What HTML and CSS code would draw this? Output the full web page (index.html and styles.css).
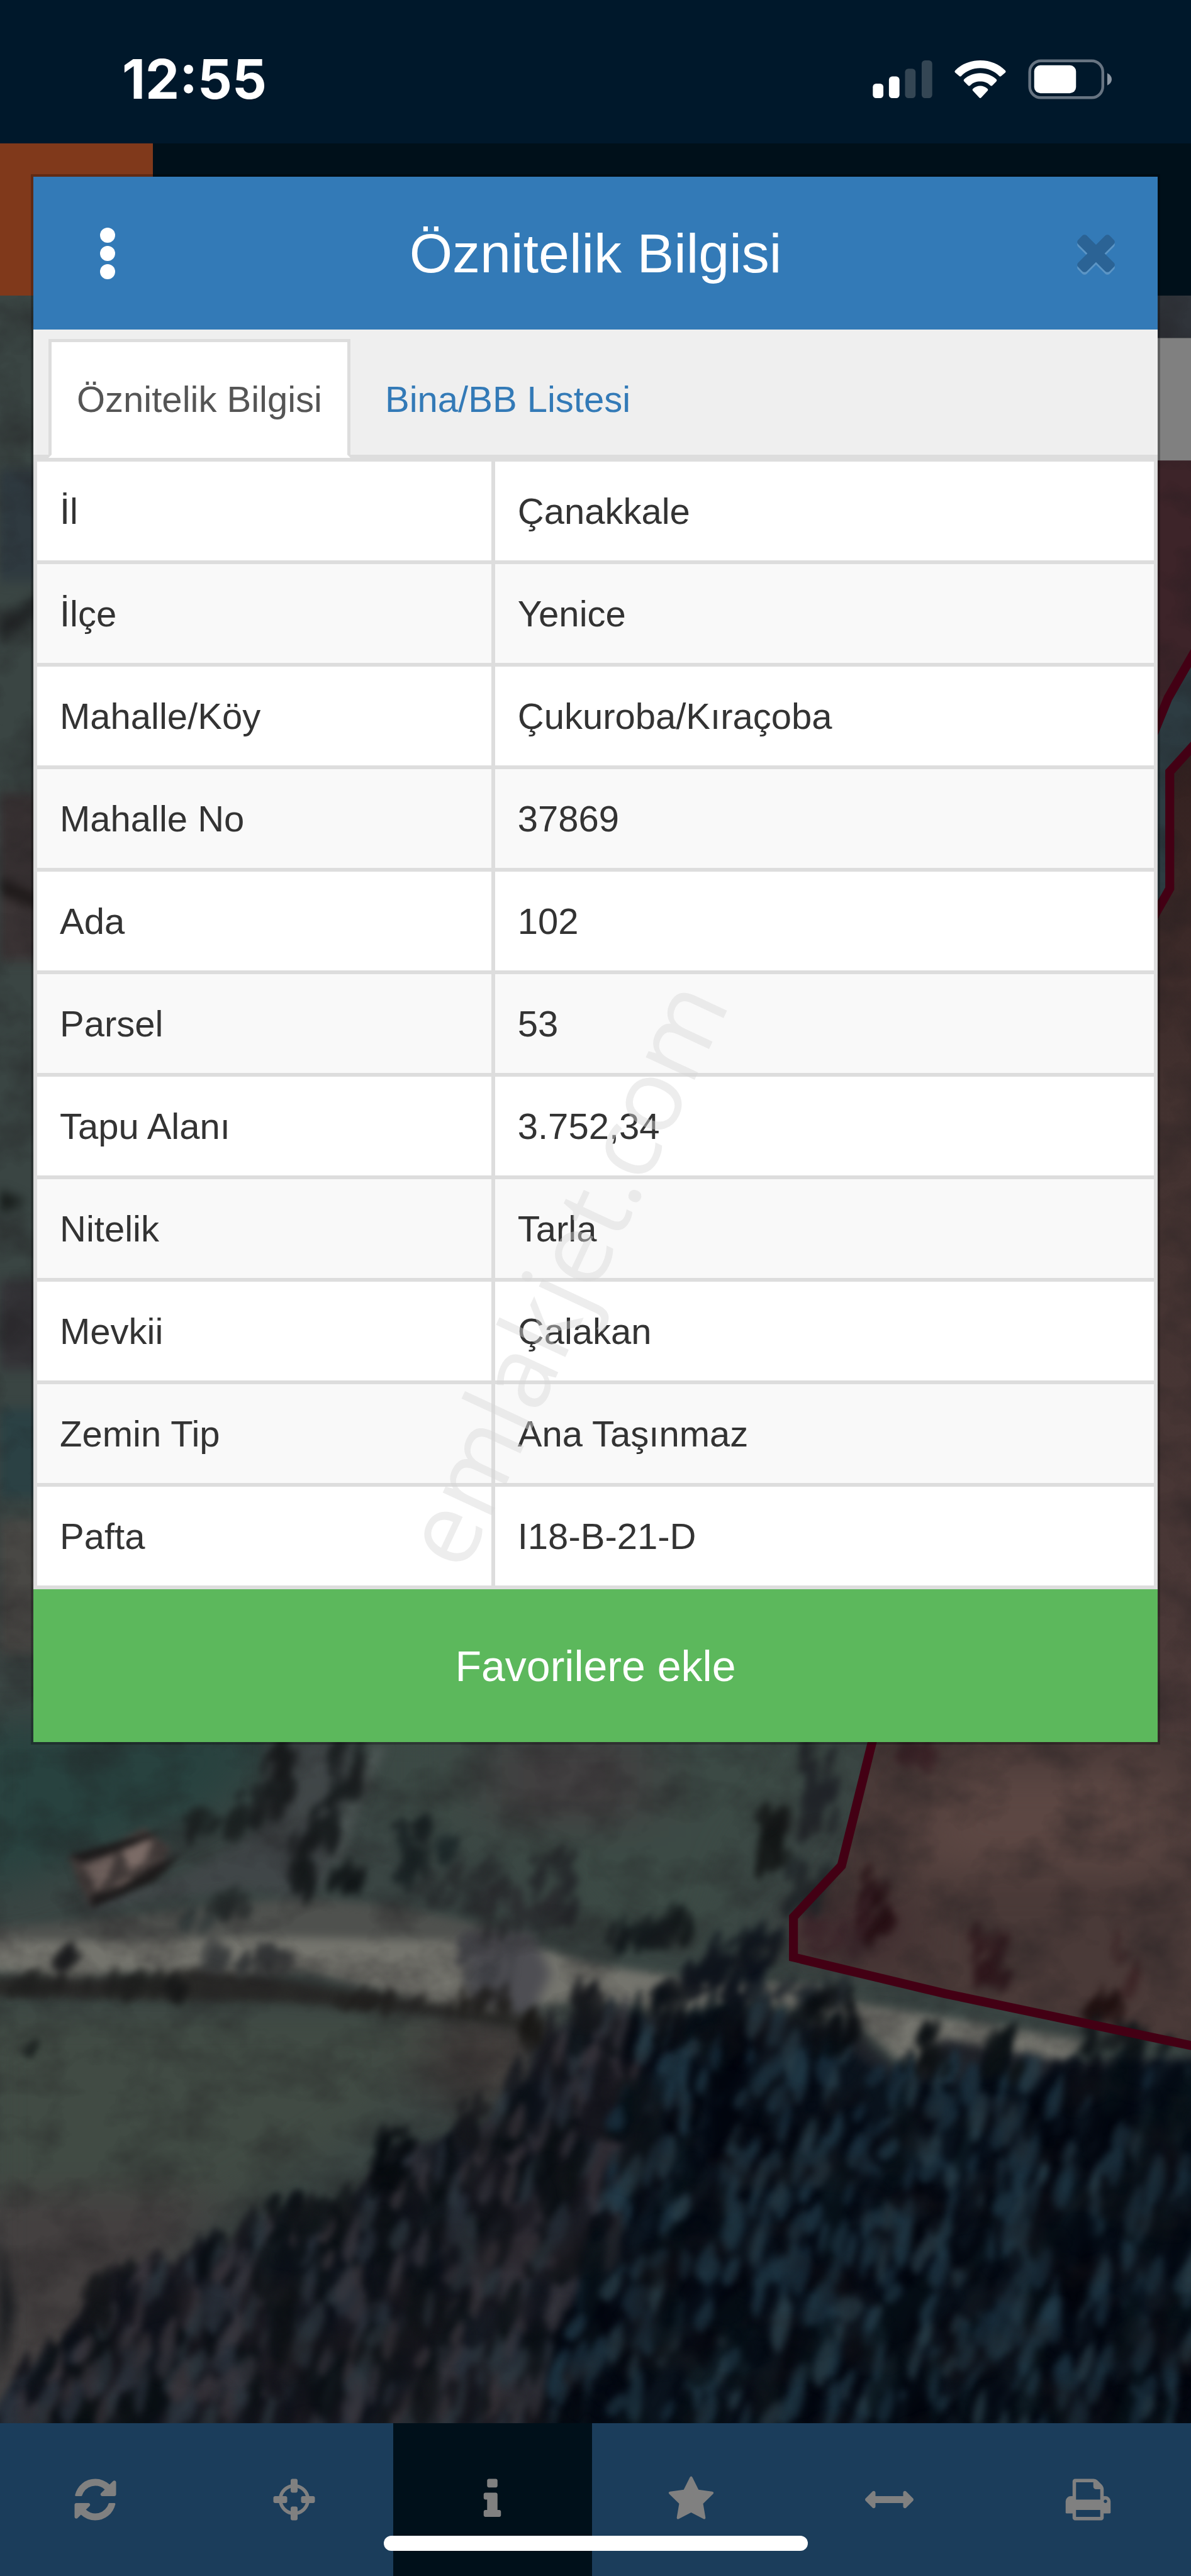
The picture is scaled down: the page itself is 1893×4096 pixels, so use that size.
FILE: index.html
```html
<!DOCTYPE html>
<html lang="tr">
<head>
  <meta charset="UTF-8" />
  <meta name="viewport" content="width=device-width, initial-scale=1.0"/>
  <title>Öznitelik Bilgisi</title>
  <link rel="stylesheet" href="styles.css">
</head>
<body>

<div class="status-bar">
  <div class="clock">12:55</div>
  <div class="status-icons">
    <svg class="signal" viewBox="0 0 107 68">
      <rect x="0" y="42" width="19" height="26" rx="6" fill="#fff"/>
      <rect x="29" y="29" width="19" height="39" rx="6" fill="#fff"/>
      <rect x="58" y="15" width="19" height="53" rx="6" fill="#344654"/>
      <rect x="88" y="0" width="19" height="68" rx="6" fill="#344654"/>
    </svg>
    <svg class="wifi" viewBox="0 0 92 68" fill="#fff">
      <path d="M46 0C28 0 12 7 1 18Q-1 20 1 22L8 28Q10 30 12 28C21 19 33 14 46 14S71 19 80 28Q82 30 84 28L91 22Q93 20 91 18C80 7 64 0 46 0Z"/>
      <path d="M46 23C35 23 25 27 17 34Q15 36 17 38L24 45Q26 47 28 45C33 40 39 38 46 38S59 40 64 45Q66 47 68 45L75 38Q77 36 75 34C67 27 57 23 46 23Z"/>
      <path d="M46 46C41 46 37 48 33 51Q31 53 33 55L44 67Q46 69 48 67L59 55Q61 53 59 51C55 48 51 46 46 46Z"/>
    </svg>
    <svg class="battery" viewBox="0 0 150 72">
      <rect x="3" y="3" width="131" height="66" rx="20" fill="none" stroke="#677482" stroke-width="5"/>
      <rect x="11" y="11" width="75" height="50" rx="11" fill="#fff"/>
      <path d="M142 25Q150 29 150 36T142 47Z" fill="#8b96a2"/>
    </svg>
  </div>
</div>

<header class="app-header">
  <div class="app-logo"></div>
</header>

<main class="map">
  <svg class="map-image" viewBox="0 529 2130 3806" preserveAspectRatio="none" color-interpolation-filters="sRGB">
    <defs>
      <filter id="soft" x="-20%" y="-20%" width="140%" height="140%"><feGaussianBlur stdDeviation="8 10"/></filter>
      <filter id="softer" x="-20%" y="-20%" width="140%" height="140%"><feGaussianBlur stdDeviation="40"/></filter>
      <filter id="leaf" x="-5%" y="-5%" width="110%" height="110%"><feGaussianBlur stdDeviation="5 7"/></filter>
      <filter id="grain" x="0" y="0" width="100%" height="100%">
        <feTurbulence type="fractalNoise" baseFrequency="0.009 0.012" numOctaves="4" seed="7"/>
        <feColorMatrix values="0 0 0 0 0.12  0 0 0 0 0.11  0 0 0 0 0.12  0 2.2 0 0 -0.9"/>
      </filter>
      <linearGradient id="strip" x1="0" y1="0" x2="0" y2="1">
        <stop offset="0" stop-color="#33201f"/>
        <stop offset="0.35" stop-color="#42312f"/>
        <stop offset="1" stop-color="#4c3a39"/>
      </linearGradient>
    </defs>
    <rect y="529" width="2130" height="3806" fill="#3a4543"/>

    <!-- strip left of the dialog -->
    <g filter="url(#soft)">
      <path d="M0 840H70V1040H0Z" fill="#2f3a40"/>
      <path d="M0 1110L70 1060V1100L0 1150Z" fill="#232829"/>
      <path d="M0 1420H70V1720H0Z" fill="#3b3435"/>
      <path d="M0 1570L70 1600V1630L0 1600Z" fill="#1e1919"/>
      <path d="M0 2130L50 2150L0 2170Z" fill="#161b19"/>
      <path d="M0 2290H70V2450H0Z" fill="#343337"/>
      <path d="M0 2520H70V2680H0Z" fill="#2b4144"/>
      <path d="M0 2720H70V2960H0Z" fill="#494845"/>
    </g>

    <!-- strip right of the dialog -->
    <path d="M2060 529H2130V605H2060Z" fill="#30343a"/>
    <path d="M2060 820H2130V1173L2089 1249L2060 1310Z" fill="#3d2429"/>
    <path d="M2060 1310L2089 1249L2130 1173V1333L2092 1381V1590L2060 1640Z" fill="#2d3c42"/>
    <path d="M2060 1640L2092 1590V1381L2130 1333V3120H2060Z" fill="url(#strip)"/>

    <!-- fields and road, in the tile's own 1568 grid -->
    <g transform="translate(0 3050) scale(1.3584 0.8292)">
      <g filter="url(#softer)">
        <path d="M-50 40H390L300 220 90 340 -50 420Z" fill="#28423f"/>
        <path d="M500 40H1130L1000 300 960 520 780 520 700 360 500 250Z" fill="#3c4a45"/>
        <path d="M640 60H860V260H640Z" fill="#413f40"/>
        <path d="M-50 660H600L500 900 300 1100 -50 1150Z" fill="#414b44"/>
        <path d="M-50 1050H300L100 1560H-50Z" fill="#444040"/>
        <path d="M560 660H720V860H560Z" fill="#433e3c"/>
      </g>
      <g filter="url(#soft)">
        <path d="M350 80L470 80 430 380 400 420 330 400 200 420 120 450 110 420 240 370 350 260Z" fill="#43474a" opacity=".7"/>
        <path d="M-20 480C150 470 260 430 400 420C540 430 640 470 720 530L600 540H-20Z" fill="#4f514e"/>
        <path d="M-20 508L200 510 340 500 600 510 700 520 780 560 900 590 1080 608 1130 645 1260 680 1430 725 1400 785 1200 795 1120 675 1000 645 900 665 760 640 640 665 520 625 400 575 180 580 80 588 -20 572Z" fill="#74746d"/>
        <path d="M605 490L700 490 725 580 700 670 625 640Z" fill="#4e4e53"/>
        <path d="M500 90L470 200 440 340" fill="none" stroke="#596160" stroke-width="10"/>
        <path d="M-20 588L180 592 260 566 380 594 520 632 680 664 700 704 560 670 380 644 -20 630Z" fill="#2a2a28"/>
      </g>
      <g filter="url(#leaf)">
        <path d="M90 325L150 300 190 265 225 310 205 370 120 440 105 390Z" fill="#473f3d"/>
        <path d="M110 345L150 325 145 365 128 400ZM160 305L200 292 190 340 170 360ZM150 385L180 370 160 400Z" fill="#7b6b66"/>
        <path d="M90 325L150 298 215 270 175 305 110 340ZM120 440L205 380 240 320 200 350 150 400 120 410Z" fill="#1d1b1b"/>
      </g>
      <!-- forest floor -->
      <g filter="url(#soft)">
        <path d="M1600 760L1400 770 1240 720 1200 810 1120 700 1000 660 880 670 760 670 700 740 690 860 620 920 520 960 450 1100 350 1110 340 1200 130 1240 100 1400 60 1600H1600Z" fill="#20242b"/>
        <path d="M1600 760L1400 800 1180 820 1080 700 900 670 870 800 850 1050 800 1250 760 1600H1600Z" fill="#0a131d"/>
        <path d="M720 760L860 760 840 1020 760 1250 640 1250 660 1000Z" fill="#312e36"/>
        <path d="M0 1150L20 1300 0 1450Z" fill="#15181c"/>
      </g>
      <g id="forest" filter="url(#leaf)"></g>
      <path d="M1150 60L1108 345 1045 455V545L1240 620 1600 748V60Z" fill="#4a3a38"/>
      <g filter="url(#softer)">
        <path d="M1240 140H1540V360H1180Z" fill="#5c4743"/>
        <path d="M1060 450L1180 420V560L1070 530Z" fill="#3e2a2e"/>
      </g>
      <g id="hedges" filter="url(#leaf)"></g>
    </g>
    <rect y="529" width="2130" height="3806" filter="url(#grain)" opacity=".4"/>

    <!-- parcel borders -->
    <g fill="none" stroke="#430014" stroke-width="16">
      <path d="M1564 3100L1505 3338L1419 3430V3502L1690 3567L2140 3662"/>
      <path d="M2140 1160L2089 1249L2060 1320"/>
      <path d="M2140 1328L2092 1381V1590L2055 1655"/>
    </g>
    <rect x="2060" y="605" width="70" height="219" fill="#808080"/>
  </svg>
</main>

<nav class="toolbar">
  <button class="tool" type="button" aria-label="Yenile">
    <svg class="icon" viewBox="0 0 1792 1792"><path d="M1639 1056q0 5-1 7-64 268-268 434.500t-478 166.500q-146 0-282.500-55t-243.500-157l-129 129q-19 19-45 19t-45-19-19-45v-448q0-26 19-45t45-19h448q26 0 45 19t19 45-19 45l-137 137q71 66 161 102t187 36q134 0 250-65t186-179q11-17 53-117 8-23 30-23h192q13 0 22.500 9.500t9.500 22.500zm25-800v448q0 26-19 45t-45 19h-448q-26 0-45-19t-19-45 19-45l138-138q-148-137-349-137-134 0-250 65t-186 179q-11 17-53 117-8 23-30 23h-199q-13 0-22.500-9.500t-9.500-22.500v-7q65-268 270-434.500t480-166.500q146 0 284 55.500t245 156.500l130-129q19-19 45-19t45 19 19 45z"/></svg>
  </button>
  <button class="tool" type="button" aria-label="Konum">
    <svg class="icon" viewBox="0 0 1792 1792"><path d="M1325 1024h-109q-26 0-45-19t-19-45v-128q0-26 19-45t45-19h109q-32-108-112.500-188.500t-188.500-112.500v109q0 26-19 45t-45 19h-128q-26 0-45-19t-19-45v-109q-108 32-188.500 112.500t-112.500 188.500h109q26 0 45 19t19 45v128q0 26-19 45t-45 19h-109q32 108 112.500 188.500t188.500 112.500v-109q0-26 19-45t45-19h128q26 0 45 19t19 45v109q108-32 188.500-112.500t112.500-188.500zm339-192v128q0 26-19 45t-45 19h-143q-37 161-154.500 278.500t-278.500 154.500v143q0 26-19 45t-45 19h-128q-26 0-45-19t-19-45v-143q-161-37-278.500-154.500t-154.500-278.500h-143q-26 0-45-19t-19-45v-128q0-26 19-45t45-19h143q37-161 154.500-278.500t278.500-154.500v-143q0-26 19-45t45-19h128q26 0 45 19t19 45v143q161 37 278.500 154.500t154.500 278.500h143q26 0 45 19t19 45z"/></svg>
  </button>
  <button class="tool active" type="button" aria-label="Bilgi">
    <svg class="icon" viewBox="0 0 1792 1792"><path d="M1216 1344v128q0 26-19 45t-45 19h-512q-26 0-45-19t-19-45v-128q0-26 19-45t45-19h64v-384h-64q-26 0-45-19t-19-45v-128q0-26 19-45t45-19h384q26 0 45 19t19 45v576h64q26 0 45 19t19 45zm-128-1152v192q0 26-19 45t-45 19h-256q-26 0-45-19t-19-45v-192q0-26 19-45t45-19h256q26 0 45 19t19 45z"/></svg>
  </button>
  <button class="tool" type="button" aria-label="Favoriler">
    <svg class="icon" viewBox="0 0 1792 1792"><path d="M1728 647q0 22-26 48l-363 354 86 500q1 7 1 20 0 21-10.500 35.500t-30.500 14.500q-19 0-40-12l-449-236-449 236q-22 12-40 12-21 0-31.500-14.500t-10.500-35.500q0-6 2-20l86-500-364-354q-25-27-25-48 0-37 56-46l502-73 225-455q19-41 49-41t49 41l225 455 502 73q56 9 56 46z"/></svg>
  </button>
  <button class="tool" type="button" aria-label="Ölçüm">
    <svg class="icon" viewBox="0 0 1792 1792"><path d="M1792 896q0 26-19 45l-256 256q-19 19-45 19t-45-19-19-45v-128h-1024v128q0 26-19 45t-45 19-45-19l-256-256q-19-19-19-45t19-45l256-256q19-19 45-19t45 19 19 45v128h1024v-128q0-26 19-45t45-19 45 19l256 256q19 19 19 45z"/></svg>
  </button>
  <button class="tool" type="button" aria-label="Yazdır">
    <svg class="icon" viewBox="0 0 1792 1792"><path d="M448 1536h896v-256h-896v256zm0-640h896v-384h-160q-40 0-68-28t-28-68v-160h-640v640zm1152 64q0-26-19-45t-45-19-45 19-19 45 19 45 45 19 45-19 19-45zm128 0v416q0 13-9.500 22.500t-22.500 9.500h-224v160q0 40-28 68t-68 28h-960q-40 0-68-28t-28-68v-160h-224q-13 0-22.500-9.500t-9.500-22.500v-416q0-79 56.500-135.500t135.500-56.500h64v-544q0-40 28-68t68-28h672q40 0 88 20t76 48l152 152q28 28 48 76t20 88v256h64q79 0 135.500 56.500t56.500 135.500z"/></svg>
  </button>
</nav>
<div class="home-indicator"></div>

<section class="dialog">
  <div class="dialog-header">
    <button class="menu-btn" type="button" aria-label="Menü">
      <svg class="dots" viewBox="0 0 24 82"><circle cx="12" cy="12" r="12"/><circle cx="12" cy="41" r="12"/><circle cx="12" cy="70" r="12"/></svg>
    </button>
    <h1 class="dialog-title">Öznitelik Bilgisi</h1>
    <button class="close-btn" type="button" aria-label="Kapat">
      <svg class="cross" viewBox="0 64 1792 1792"><path d="M1490 1322q0 40-28 68l-136 136q-28 28-68 28t-68-28l-294-294-294 294q-28 28-68 28t-68-28l-136-136q-28-28-28-68t28-68l294-294-294-294q-28-28-28-68t28-68l136-136q28-28 68-28t68 28l294 294 294-294q28-28 68-28t68 28l136 136q28 28 28 68t-28 68l-294 294 294 294q28 28 28 68z"/></svg>
    </button>
  </div>

  <div class="tabs">
    <a class="tab active" href="#oznitelik">Öznitelik Bilgisi</a>
    <a class="tab" href="#bina">Bina/BB Listesi</a>
  </div>

  <table class="info" id="oznitelik">
    <tr><th scope="row">İl</th><td>Çanakkale</td></tr>
    <tr><th scope="row">İlçe</th><td>Yenice</td></tr>
    <tr><th scope="row">Mahalle/Köy</th><td>Çukuroba/Kıraçoba</td></tr>
    <tr><th scope="row">Mahalle No</th><td>37869</td></tr>
    <tr><th scope="row">Ada</th><td>102</td></tr>
    <tr><th scope="row">Parsel</th><td>53</td></tr>
    <tr><th scope="row">Tapu Alanı</th><td>3.752,34</td></tr>
    <tr><th scope="row">Nitelik</th><td>Tarla</td></tr>
    <tr><th scope="row">Mevkii</th><td>Çalakan</td></tr>
    <tr><th scope="row">Zemin Tip</th><td>Ana Taşınmaz</td></tr>
    <tr><th scope="row">Pafta</th><td>I18-B-21-D</td></tr>
  </table>

  <button class="favorite-btn" type="button">Favorilere ekle</button>
  <div class="watermark">emlakjet.com</div>
</section>

<script src="map.js"></script>
</body>
</html>
```
FILE: styles.css
```css
* {
  box-sizing: border-box;
}
body {
  margin: 0;
  min-height: 100vh;
  display: flex;
  flex-direction: column;
  position: relative;
  overflow-x: hidden;
  background: #00101a;
  font-family: "Liberation Sans", Arial, Helvetica, sans-serif;
  font-size: 58px;
  color: #333;
}
button {
  border: 0;
  margin: 0;
  padding: 0;
  background: none;
  font-family: inherit;
}

/* status bar */
.status-bar {
  height: 228px;
  padding: 24px 126px 0 194px;
  display: flex;
  align-items: center;
  justify-content: space-between;
  background: #00182b;
}
.clock {
  font-family: Inter, "Liberation Sans", sans-serif;
  font-size: 86px;
  font-weight: 700;
  color: #fff;
}
.status-icons {
  display: flex;
  align-items: center;
  gap: 35px;
}
.signal {
  width: 95px;
  height: 60px;
}
.wifi {
  width: 82px;
  height: 60px;
}
.battery {
  width: 133px;
  height: 64px;
}

/* page behind the dialog */
.app-header {
  height: 242px;
  background: #00101a;
}
.app-logo {
  width: 243px;
  height: 100%;
  background: #80391b;
}
.map {
  flex: 1;
  display: flex;
  min-height: 0;
}
.map-image {
  width: 100%;
  height: 100%;
}

/* bottom toolbar */
.toolbar {
  height: 243px;
  margin-left: -6px;
  padding-right: 6px;
  display: grid;
  grid-template-columns: repeat(6, 1fr);
  background: #1b3d5b;
}
.tool {
  display: flex;
  align-items: center;
  justify-content: center;
}
.tool.active {
  background: #00101a;
}
.icon {
  width: 77px;
  height: 77px;
  fill: #808080;
}
.home-indicator {
  position: absolute;
  bottom: 40px;
  left: 50%;
  width: 674px;
  height: 24px;
  margin-left: -337px;
  border-radius: 12px;
  background: #fff;
}

/* dialog */
.dialog {
  position: absolute;
  top: 281px;
  left: 53px;
  right: 53px;
  background: #fff;
  box-shadow: 0 0 0 4px rgba(0, 0, 0, 0.25);
}
.dialog-header {
  height: 243px;
  padding: 0 53px;
  display: grid;
  grid-template-columns: 90px 1fr 90px;
  align-items: center;
  background: #337ab7;
}
.menu-btn,
.close-btn {
  height: 90px;
  display: flex;
  align-items: center;
  justify-content: center;
}
.menu-btn {
  padding-left: 40px;
}
.dots {
  width: 24px;
  height: 82px;
  fill: #fff;
}
.cross {
  width: 90px;
  height: 90px;
  fill: #2b6395;
  filter: drop-shadow(0 4px 0 #5c95c5);
}
.dialog-title {
  margin: 0;
  font-size: 88px;
  font-weight: normal;
  text-align: center;
  color: #fff;
}

/* tabs */
.tabs {
  height: 204px;
  padding: 15px 24px 0;
  display: flex;
  gap: 10px;
  background: #efefef;
  border-bottom: 5px solid #ddd;
}
.tab {
  height: 189px;
  padding: 0 40px;
  border: 5px solid transparent;
  line-height: 182px;
  color: #337ab7;
  text-decoration: none;
}
.tab.active {
  background: #fff;
  border-color: #ddd #ddd #fff;
  color: #555;
}

/* attribute table */
.info {
  width: 100%;
  table-layout: fixed;
  border-collapse: separate;
  border-spacing: 0;
  border: 6px solid #ddd;
}
.info th,
.info td {
  padding: 50px 36px;
  border-bottom: 6px solid #ddd;
  line-height: 57px;
  font-weight: normal;
  text-align: left;
}
.info th {
  width: 41%;
  border-right: 6px solid #ddd;
}
.info tr:nth-child(even) {
  background: #f9f9f9;
}
.info tr:last-child th,
.info tr:last-child td {
  border-bottom: 0;
}

.favorite-btn {
  display: block;
  width: 100%;
  height: 243px;
  background: #5cb85c;
  color: #fff;
  font-size: 68px;
}
.watermark {
  position: absolute;
  top: 1742px;
  left: 47%;
  transform: translate(-50%, -50%) rotate(-65deg);
  font-family: "Open Sans", sans-serif;
  font-size: 160px;
  white-space: nowrap;
  color: rgba(214, 214, 214, 0.45);
  pointer-events: none;
}
```
FILE: map.js
```js
// fixed seed so the trees land on the same spots every time
let seed = 21;
function rnd() {
  seed = (seed * 16807) % 2147483647;
  return seed / 2147483647;
}

function tree(parent, x, y, w, h, color, opacity) {
  const p = document.createElementNS('http://www.w3.org/2000/svg', 'path');
  const lean = w * 0.5;
  p.setAttribute('d', `M${x + lean} ${y - h / 2}Q${x + w} ${y} ${x} ${y + h / 2}Q${x - w} ${y + h / 4} ${x + lean} ${y - h / 2}Z`);
  p.setAttribute('fill', color);
  p.setAttribute('opacity', opacity);
  parent.appendChild(p);
}

// top edge of the forest as x, y pairs
const edge = [[0, 1500], [80, 1400], [130, 1260], [250, 1200], [350, 1120], [450, 1100], [510, 980], [620, 920], [700, 760], [780, 650], [900, 660], [1050, 650], [1120, 720], [1200, 820], [1260, 760], [1420, 780], [1568, 780]];
function edgeY(x) {
  for (let i = 1; i < edge.length; i++) {
    if (x <= edge[i][0]) {
      const [x0, y0] = edge[i - 1];
      const [x1, y1] = edge[i];
      return y0 + (y1 - y0) * (x - x0) / (x1 - x0);
    }
  }
  return 780;
}

const forest = document.getElementById('forest');
function plant(count, lights) {
  for (let i = 0; i < count; i++) {
    const x = rnd() * 1568;
    const top = edgeY(x);
    const y = top + rnd() * (1580 - top);
    const right = x > 830 - (y - 700) * 0.15;
    const light = right ? ['#1d3442', '#213b49', '#1a2f3e', '#2a3f4a'] : ['#36363e', '#2d3840', '#3c383f', '#2a313c'];
    const dark = right ? ['#01040d', '#030912', '#050f17'] : ['#0c1018', '#15151c', '#090e12'];
    const set = lights ? light : dark;
    const color = set[Math.floor(rnd() * set.length)];
    if (lights) {
      tree(forest, x, y, 12 + rnd() * 16, 50 + rnd() * 70, color, 0.75);
    } else {
      tree(forest, x, y, 20 + rnd() * 32, 80 + rnd() * 110, color, 0.7);
    }
  }
}
plant(500, false);
plant(700, true);
plant(380, false);
plant(300, true);

// scattered trees: x, y, spread x, spread y, count, colour
const hedges = document.getElementById('hedges');
const groups = [
  [365, 140, 18, 60, 20, '#15181a'], [340, 215, 30, 40, 18, '#1a1f20'], [280, 255, 35, 25, 16, '#1b2222'],
  [455, 140, 18, 60, 22, '#1a1f20'], [425, 240, 18, 60, 22, '#1a1f20'], [395, 350, 12, 60, 18, '#14191a'],
  [455, 375, 22, 20, 14, '#131718'], [540, 320, 20, 70, 26, '#182223'], [590, 300, 16, 20, 8, '#1d2829'],
  [610, 390, 60, 50, 26, '#2a2e30'], [725, 400, 28, 80, 32, '#25282b'], [680, 450, 50, 50, 26, '#2b2c2f'],
  [300, 435, 24, 20, 12, '#252b2b'], [260, 465, 20, 12, 6, '#333a3a'],
  [85, 542, 12, 8, 10, '#1c1d1f'], [320, 550, 55, 25, 26, '#36393b'], [1015, 290, 18, 60, 26, '#121516'],
  [1075, 180, 22, 100, 34, '#202428'], [1060, 400, 30, 60, 18, '#20262a'], [840, 500, 40, 30, 26, '#11191b'],
  [890, 480, 14, 30, 10, '#11181a'], [960, 540, 60, 50, 34, '#10161d'], [940, 590, 40, 50, 24, '#0f141c'],
  [985, 600, 20, 50, 16, '#0d131b'], [1050, 620, 60, 20, 16, '#1e262c'], [640, 560, 40, 60, 22, '#3f4045'],
  [1150, 430, 20, 70, 26, '#260f14'], [1100, 470, 40, 70, 12, '#3a2429'], [1200, 110, 22, 50, 14, '#3b2226'],
  [1300, 540, 24, 60, 20, '#2e171b'], [1450, 650, 20, 20, 12, '#20100f'], [1480, 570, 14, 60, 6, '#3c2527'],
  [512, 980, 24, 60, 28, '#060b10'], [375, 1130, 22, 60, 18, '#0b1115'], [415, 1110, 16, 30, 10, '#0f1519'],
  [620, 900, 18, 60, 14, '#15171b'], [1230, 750, 20, 50, 18, '#0c1114'], [1320, 750, 20, 60, 18, '#0d1216'],
  [1480, 720, 60, 30, 18, '#0f1518'], [1090, 690, 30, 60, 26, '#04090e'], [880, 670, 22, 60, 22, '#090f15'],
  [770, 650, 16, 50, 16, '#14171b'], [700, 700, 14, 30, 10, '#181715'], [940, 700, 30, 40, 16, '#060b12'],
  [130, 1290, 14, 70, 14, '#121519'], [120, 605, 110, 10, 20, '#1f201e'], [560, 640, 120, 16, 24, '#201f1d'],
  [228, 610, 10, 20, 6, '#171818'], [38, 745, 4, 8, 3, '#1d2422']
];
for (const [x, y, sx, sy, n, color] of groups) {
  for (let i = 0; i < n; i++) {
    tree(hedges, x + (rnd() * 2 - 1) * sx, y + (rnd() * 2 - 1) * sy, 9 + rnd() * 14, 28 + rnd() * 48, color, 0.65);
  }
}
```
